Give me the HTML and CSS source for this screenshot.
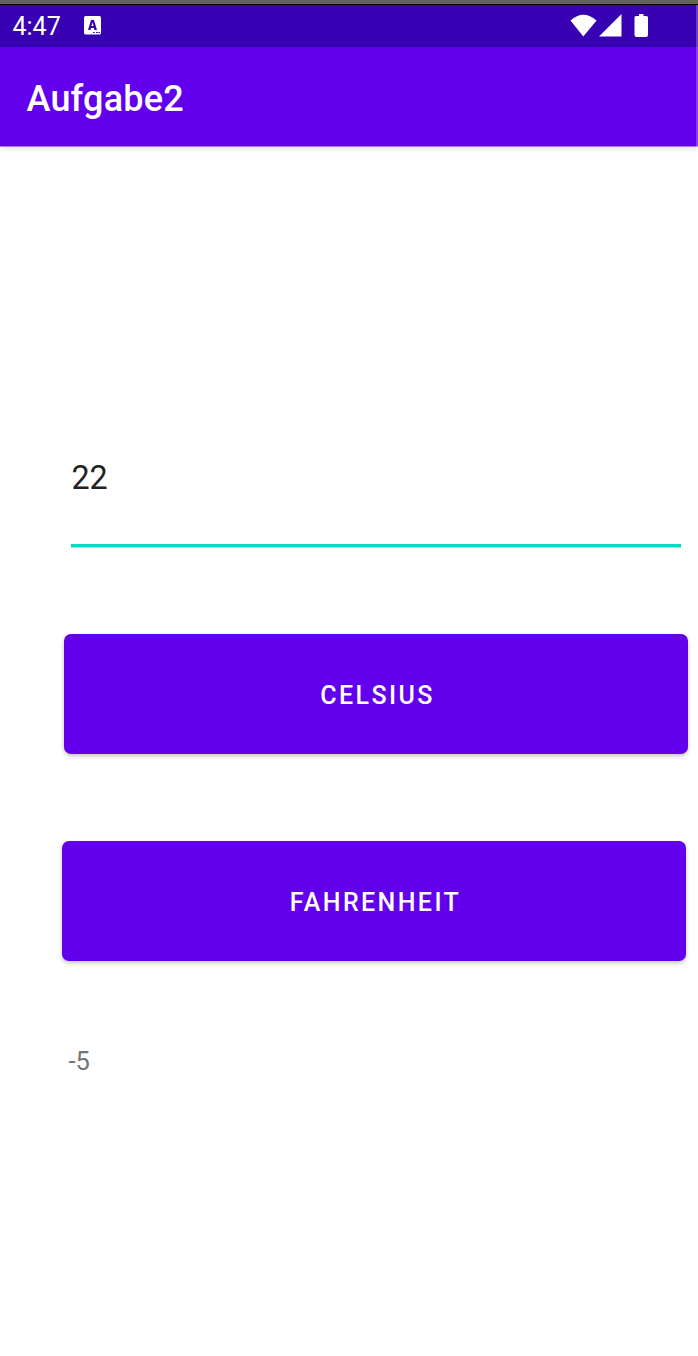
FILE: index.html
```
<!DOCTYPE html>
<html lang="de">
<head>
<meta charset="utf-8">
<title>Aufgabe2</title>
<link rel="stylesheet" href="styles.css">
</head>
<body>
<div class="screen">
  <div class="bezel"></div>
  <header class="status">
    <span class="clock">4:47</span>
    <svg class="keyboard-icon" width="17" height="19" viewBox="0 0 17 19"><rect width="17" height="18.5" rx="1.500" fill="#fff"/><path d="M7 4h3l3 10h-2.600l-.5-2H7l-.5 2H4zM8.500 6.300l-1 3.700h2z" fill="#3700b3" fill-rule="evenodd"/><path d="M9 16.500h1.700M12 16.500h1.700M14.500 16.500h1.500" stroke="#3700b3" stroke-width="1"/></svg>
    <svg class="signals" width="79" height="24" viewBox="0 0 79 24"><path d="M.5 6.500Q13.300-5 26.600 6.500L13.300 22.500zM29 22.500H51.500V0zM64.500 3.500Q64.500 2 66 2H69V0h4.500v2H76.500q1.500 0 1.500 1.500v17.500q0 2-2 2H66.500q-2 0-2-2z" fill="#fff"/></svg>
  </header>
  <div class="appbar"><h1 class="title">Aufgabe2</h1></div>
  <main class="content">
    <input class="field" type="text" value="22" aria-label="Temperatur">
    <button class="button celsius">CELSIUS</button>
    <button class="button fahrenheit">FAHRENHEIT</button>
    <p class="result">-5</p>
  </main>
  <div class="edge"></div>
</div>
</body>
</html>
```
FILE: styles.css
```
* { box-sizing: border-box; }
body { margin: 0; background: #fff; font-family: Roboto, sans-serif; }
.screen { position: relative; height: 1356px; overflow: hidden; display: flex; flex-direction: column; }
.bezel { height: 5px; flex: none; background: #626262; border-bottom: 1px solid #000; }
.status { height: 42px; flex: none; display: flex; align-items: flex-start; padding: 0 49px 0 12.500px; background: #3700b3; color: #fff; }
.clock { width: 71.700px; padding-top: 7px; font-size: 25px; line-height: 30px; }
.keyboard-icon { margin-top: 11px; }
.signals { margin: 9px 0 0 auto; }
.appbar { height: 100px; flex: none; padding: 30px 26.500px 0; background: #6200ee; border-bottom: 1px solid #ad77ec; box-shadow: 0 1px 6px rgba(0, 0, 0, .15); }
.title { margin: 0; color: #fff; font-size: 36px; line-height: 44px; font-weight: 500; letter-spacing: .2px; }
.content { display: flex; flex-direction: column; }
.field { width: 610px; height: 101px; margin: 299px 0 0 71px; padding: 0 0 34px .4px; border: 0; border-bottom: 3px solid #03dac5; box-shadow: 0 1px 0 rgba(3, 218, 197, .45); outline: 0; color: #212121; background: transparent; font: 400 32.300px/38px Roboto, sans-serif; }
.button { width: 624px; height: 120px; border: 0; border-radius: 7px; padding: 3px 0 0 3px; background: #6200ee; color: #fff; box-shadow: 0 2px 4px rgba(0, 0, 0, .24); font: 500 25px/30px Roboto, sans-serif; letter-spacing: 2.400px; }
.celsius { margin: 87px 0 0 64px; }
.fahrenheit { margin: 87px 0 0 62px; }
.result { margin: 85px 0 0 68.500px; color: #757575; font-size: 25.500px; line-height: 30px; }
.edge { position: absolute; top: 5px; right: 0; width: 2px; height: 142px; background: rgba(255, 255, 255, .25); }
```
